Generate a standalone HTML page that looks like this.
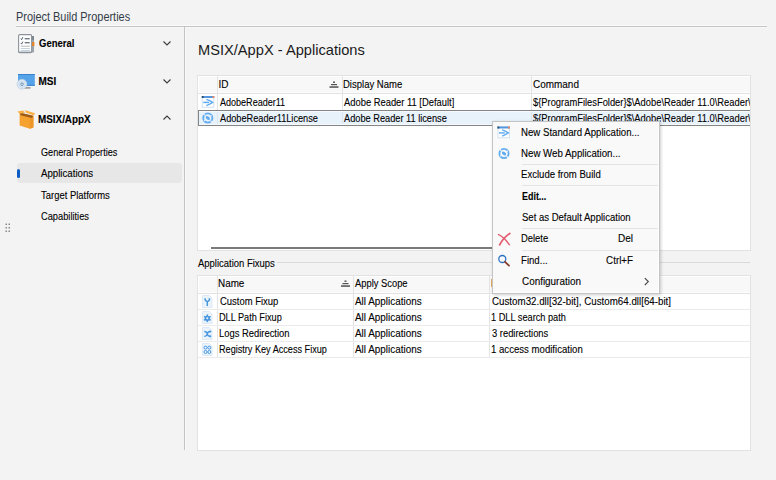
<!DOCTYPE html>
<html><head><meta charset="utf-8">
<style>
html,body{margin:0;padding:0}
body{width:776px;height:480px;overflow:hidden;background:#f3f3f3;position:relative;font-family:"Liberation Sans",sans-serif;color:#000}
.a{position:absolute}
.t{position:absolute;white-space:pre;font-size:10px;line-height:12px;-webkit-text-stroke:0.1px currentColor;transform-origin:0 0}
svg{position:absolute;left:0;top:0;overflow:visible}
</style></head><body>

<!-- header lines -->
<div class="a" style="left:16px;top:25px;width:751px;height:1px;background:#fbfbfb"></div>
<div class="a" style="left:16px;top:26px;width:751px;height:1px;background:#c3c3c3"></div>
<div class="a" style="left:16px;top:27px;width:751px;height:1px;background:#f8f8f8"></div>
<div class="a" style="left:184px;top:26px;width:1px;height:424px;background:#c3c3c3"></div>
<div class="a" style="left:185px;top:27px;width:1px;height:423px;background:#f9f9f9"></div>

<!-- sidebar selection -->
<div class="a" style="left:17px;top:163px;width:165px;height:20px;background:#e7e7e7;border-radius:3px"></div>
<div class="a" style="left:17px;top:169px;width:3px;height:9px;background:#0b5cc4;border-radius:1.5px"></div>

<!-- top table -->
<div class="a" style="left:197px;top:75px;width:552px;height:174px;background:#fff;border:1px solid #e2e2e2"></div>
<div class="a" style="left:198px;top:76px;width:552px;height:17px;background:#f8f8f8;box-shadow:inset 1px 1px 0 #fff, inset 0 -1px 0 #fdfdfd"></div>
<div class="a" style="left:198px;top:93px;width:552px;height:1px;background:#e2e2e2"></div>
<div class="a" style="left:217px;top:76px;width:1px;height:34px;background:#e4e4e4"></div>
<div class="a" style="left:342px;top:76px;width:1px;height:34px;background:#e4e4e4"></div>
<div class="a" style="left:531px;top:76px;width:1px;height:34px;background:#e4e4e4"></div>
<div class="a" style="left:198px;top:110px;width:551px;height:14px;background:#e8f2fb;border:1px solid #858585;border-right:0;box-shadow:inset 0 1px 0 #f6faff, inset 0 -1px 0 #f6faff"></div>
<div class="a" style="left:217px;top:112px;width:1px;height:12px;background:#dde6ee"></div>
<div class="a" style="left:342px;top:112px;width:1px;height:12px;background:#dde6ee"></div>
<div class="a" style="left:531px;top:112px;width:1px;height:12px;background:#dde6ee"></div>
<div class="a" style="left:211px;top:247px;width:281px;height:2px;background:#7a7a7a"></div>

<!-- lower group -->
<div class="a" style="left:277px;top:262px;width:473px;height:1px;background:#dadada"></div>
<div class="a" style="left:197px;top:275px;width:552px;height:174px;background:#fff;border:1px solid #e2e2e2"></div>
<div class="a" style="left:198px;top:276px;width:552px;height:17px;background:#f8f8f8;box-shadow:inset 1px 1px 0 #fff, inset 0 -1px 0 #fdfdfd"></div>
<div class="a" style="left:198px;top:293px;width:552px;height:1px;background:#e2e2e2"></div>
<div class="a" style="left:217px;top:276px;width:1px;height:82px;background:#e4e4e4"></div>
<div class="a" style="left:353px;top:276px;width:1px;height:82px;background:#e4e4e4"></div>
<div class="a" style="left:489px;top:276px;width:1px;height:82px;background:#e4e4e4"></div>
<div class="a" style="left:198px;top:309px;width:552px;height:1px;background:#ebebeb"></div>
<div class="a" style="left:198px;top:325px;width:552px;height:1px;background:#ebebeb"></div>
<div class="a" style="left:198px;top:341px;width:552px;height:1px;background:#ebebeb"></div>
<div class="a" style="left:198px;top:357px;width:552px;height:1px;background:#ebebeb"></div>

<!-- command column (clipped) -->
<div class="a" style="left:532px;top:94px;width:218px;height:32px;overflow:hidden">
 <div class="t" style="left:0.5px;top:3px;transform:scaleX(0.935)">${ProgramFilesFolder}$\Adobe\Reader 11.0\Reader\AcroRd32.exe</div>
 <div class="t" style="left:0.5px;top:19px;transform:scaleX(0.935)">${ProgramFilesFolder}$\Adobe\Reader 11.0\Reader\AcroRd32.exe</div>
</div>

<svg width="776" height="480">
 <!-- chevrons -->
 <g fill="none" stroke="#3c3c3c" stroke-width="1.1">
  <path d="M163.5 41.5 L167 45 L170.5 41.5"/>
  <path d="M163.5 79.5 L167 83 L170.5 79.5"/>
  <path d="M163.5 119.5 L167 116 L170.5 119.5"/>
 </g>
 <!-- grip -->
 <g fill="#8a8a8a">
  <rect x="5.5" y="223.5" width="1.5" height="1.5"/><rect x="8.5" y="223.5" width="1.5" height="1.5"/>
  <rect x="5.5" y="227" width="1.5" height="1.5"/><rect x="8.5" y="227" width="1.5" height="1.5"/>
  <rect x="5.5" y="230.5" width="1.5" height="1.5"/><rect x="8.5" y="230.5" width="1.5" height="1.5"/>
 </g>
 <!-- General icon: notepad -->
 <g>
  <rect x="18.6" y="34.6" width="13" height="18" rx="1.2" fill="#fff" stroke="#8b929a" stroke-width="1.1"/>
  <rect x="18.6" y="51.6" width="13" height="1.4" fill="#8b929a"/>
  <rect x="31.8" y="36" width="2.2" height="16.5" fill="#9aa3ac"/>
  <rect x="31.8" y="36" width="2.2" height="4" fill="#7d8792"/>
  <rect x="32.2" y="42" width="2.2" height="4.1" fill="#ea821c"/>
  <path d="M20.9 38.6 l0.8 1.1 l1.1 -2.6 M20.9 43 l0.8 1.1 l1.1 -2.6" fill="none" stroke="#4a5a6c" stroke-width="0.9"/>
  <rect x="24.7" y="38" width="5" height="1.4" fill="#737b84"/>
  <rect x="24.7" y="42" width="5" height="1.4" fill="#737b84"/>
  <rect x="20.8" y="45.6" width="9.2" height="1.3" fill="#c9c9c9"/>
  <rect x="20.8" y="48.2" width="9.2" height="0.8" fill="#b8c8d8"/>
  <rect x="20.8" y="50.1" width="9.2" height="0.8" fill="#b8c8d8"/>
 </g>
 <!-- MSI icon -->
 <g>
  <rect x="18" y="74" width="16.8" height="11.8" fill="#55a3e8"/>
  <rect x="18" y="74" width="16.8" height="1" fill="#3a82cc"/>
  <rect x="18" y="84.8" width="16.8" height="1" fill="#3a82cc"/>
  <rect x="24.5" y="87.3" width="6" height="1.2" fill="#7a7a7a"/>
  <circle cx="22" cy="84.2" r="4.9" fill="#dce9f4" stroke="#b4cadc" stroke-width="0.7"/>
  <circle cx="22" cy="84.2" r="3" fill="none" stroke="#c6dbed" stroke-width="0.8"/>
  <circle cx="22" cy="84.2" r="1.3" fill="#f2f7fb" stroke="#5e88ad" stroke-width="0.9"/>
 </g>
 <!-- MSIX icon: box -->
 <g>
  <path d="M19.6 113 L33.5 116.2 L33.4 127.4 L29.8 128.8 L19.6 125.4 Z" fill="#f6a230"/>
  <path d="M29.8 117.6 L33.5 116.2 L33.4 127.4 L29.8 128.8 Z" fill="#ee9628"/>
  <path d="M19.8 112.6 L33.4 115.8 L31.8 118 L20.5 115.2 Z" fill="#9c5c18"/>
  <path d="M17.3 111.6 L22.9 110.4 L25.2 112.6 L19.8 113.8 Z" fill="#fab044"/>
  <path d="M24.6 110 L35 113.2 L33.8 115.6 L26.2 112.8 Z" fill="#fab044"/>
 </g>
 <!-- sort glyphs -->
 <g fill="#505050">
  <rect x="333" y="81.5" width="2" height="1.4"/><rect x="331" y="84" width="6" height="1.2"/><rect x="329.5" y="86.3" width="9" height="1.5"/>
  <rect x="344.5" y="280.5" width="2" height="1.4"/><rect x="342.5" y="283" width="6" height="1.2"/><rect x="341" y="285.3" width="9" height="1.5"/>
 </g>
 <!-- row icons top table -->
 <g transform="translate(201.8 96)">
  <rect x="0.5" y="0.5" width="11.5" height="10.8" fill="#fff" stroke="#d3e2f1"/>
  <rect x="0" y="0" width="12.5" height="2" fill="#5597de"/>
  <rect x="0" y="0" width="1.8" height="2" fill="#2d4f70"/>
  <rect x="10.7" y="0" width="1.8" height="2" fill="#ee8a5c"/>
  <path d="M1.5 6.4 H7.3" stroke="#62aaee" stroke-width="1.5" fill="none"/>
  <path d="M4.6 3.4 Q8 4.4 10.8 6.4 Q8 8.4 4.6 9.6" stroke="#62aaee" stroke-width="1.4" fill="none"/>
 </g>
 <g transform="translate(207.8 118)">
  <circle r="4.6" fill="none" stroke="#62acf0" stroke-width="1.8"/>
  <ellipse rx="2.4" ry="1.6" transform="rotate(35)" fill="#62acf0"/>
  <path d="M-4 -4 L-2.6 -2.6 M4 4 L2.6 2.6 M3.8 -2.8 L2 -1.5 M-3.8 2.8 L-2 1.5" stroke="#e8f2fb" stroke-width="1.1"/>
 </g>
 <!-- lower table doc icons -->
 <g fill="#ebf3fb" stroke="#d3e3f3" stroke-width="0.7">
  <path d="M202.5 295.5 H209.3 L212 298.2 V307.5 H202.5 Z"/>
  <path d="M202.5 311.5 H209.3 L212 314.2 V323.5 H202.5 Z"/>
  <path d="M202.5 327.5 H209.3 L212 330.2 V339.5 H202.5 Z"/>
  <path d="M202.5 343.5 H209.3 L212 346.2 V355.5 H202.5 Z"/>
 </g>
 <g fill="none" stroke="#4797e0" stroke-width="1.5">
  <path d="M205.2 298.2 V300 Q207.3 303 209.4 300 V298.2 M207.3 302 V306"/>
  <path d="M204.3 331.5 Q206.8 331.5 207.3 333.8 Q207.8 336.3 210.3 336.3 M204.3 336.3 Q206.8 336.3 207.3 333.8 Q207.8 331.5 210.3 331.5" stroke-width="1.3"/>
  <circle cx="210.2" cy="331.5" r="1.1" fill="#4797e0" stroke="none"/><circle cx="210.2" cy="336.3" r="1.1" fill="#4797e0" stroke="none"/>
 </g>
 <g transform="translate(207.3 318.3)" fill="#4797e0">
  <circle r="2.6"/>
  <rect x="-0.8" y="-3.8" width="1.6" height="7.6"/>
  <rect x="-0.8" y="-3.8" width="1.6" height="7.6" transform="rotate(60)"/>
  <rect x="-0.8" y="-3.8" width="1.6" height="7.6" transform="rotate(120)"/>
  <circle r="1" fill="#ebf3fb"/>
 </g>
 <g fill="none" stroke="#4797e0" stroke-width="1">
  <circle cx="205.5" cy="347.6" r="1.5"/><circle cx="209.3" cy="347.6" r="1.5"/>
  <circle cx="205.5" cy="352" r="1.5"/><circle cx="209.3" cy="352" r="1.5"/>
 </g>
</svg>

<div class="t" style="left:16px;top:10px;font-size:12px;line-height:14px;color:#323b47;transform:scaleX(0.910);-webkit-text-stroke:0">Project Build Properties</div>
<div class="t" style="left:39.0px;top:38px;font-weight:bold;transform:scaleX(0.951)">General</div>
<div class="t" style="left:38.5px;top:76px;font-weight:bold">MSI</div>
<div class="t" style="left:38.0px;top:114px;font-weight:bold;transform:scaleX(0.987)">MSIX/AppX</div>
<div class="t" style="left:41px;top:147px;transform:scaleX(0.909)">General Properties</div>
<div class="t" style="left:41px;top:168px;transform:scaleX(0.967)">Applications</div>
<div class="t" style="left:41px;top:190px;transform:scaleX(0.945)">Target Platforms</div>
<div class="t" style="left:41px;top:211px;transform:scaleX(0.927)">Capabilities</div>
<div class="t" style="left:197.5px;top:41px;font-size:15px;line-height:18px;color:#1a1a1a;transform:scaleX(0.976);-webkit-text-stroke:0">MSIX/AppX - Applications</div>
<div class="t" style="left:218.5px;top:79px">ID</div>
<div class="t" style="left:343px;top:79px;transform:scaleX(0.951)">Display Name</div>
<div class="t" style="left:532.5px;top:79px;transform:scaleX(0.996)">Command</div>
<div class="t" style="left:219.5px;top:97px;transform:scaleX(0.903)">AdobeReader11</div>
<div class="t" style="left:344px;top:97px;transform:scaleX(0.937)">Adobe Reader 11 [Default]</div>
<div class="t" style="left:219.5px;top:113px;transform:scaleX(0.919)">AdobeReader11License</div>
<div class="t" style="left:344px;top:113px;transform:scaleX(0.922)">Adobe Reader 11 license</div>
<div class="t" style="left:198px;top:258px;transform:scaleX(0.947)">Application Fixups</div>
<div class="t" style="left:217.7px;top:278px;transform:scaleX(0.988)">Name</div>
<div class="t" style="left:354.5px;top:278px;transform:scaleX(0.936)">Apply Scope</div>
<div class="t" style="left:490.5px;top:278px;transform:scaleX(0.940)">Details</div>
<div class="t" style="left:219.5px;top:296px;transform:scaleX(0.946)">Custom Fixup</div>
<div class="t" style="left:355.0px;top:296px;transform:scaleX(0.990)">All Applications</div>
<div class="t" style="left:491.5px;top:296px;transform:scaleX(0.976)">Custom32.dll[32-bit], Custom64.dll[64-bit]</div>
<div class="t" style="left:218.5px;top:312px;transform:scaleX(0.915)">DLL Path Fixup</div>
<div class="t" style="left:355.0px;top:312px;transform:scaleX(0.990)">All Applications</div>
<div class="t" style="left:490.5px;top:312px;transform:scaleX(0.921)">1 DLL search path</div>
<div class="t" style="left:218.5px;top:328px;transform:scaleX(0.939)">Logs Redirection</div>
<div class="t" style="left:355.0px;top:328px;transform:scaleX(0.990)">All Applications</div>
<div class="t" style="left:491.5px;top:328px;transform:scaleX(0.937)">3 redirections</div>
<div class="t" style="left:218.9px;top:344px;transform:scaleX(0.911)">Registry Key Access Fixup</div>
<div class="t" style="left:355.0px;top:344px;transform:scaleX(0.990)">All Applications</div>
<div class="t" style="left:490.9px;top:344px;transform:scaleX(0.960)">1 access modification</div>

<!-- context menu -->
<div class="a" style="left:492px;top:121px;width:168px;height:173px;box-sizing:border-box;background:#f9f9f9;border:1px solid #c4c4c4;box-shadow:inset -1px -1px 0 #fff, 1px 1px 3px rgba(0,0,0,0.2)"></div>
<div class="a" style="left:522px;top:164px;width:136px;height:1px;background:#e4e4e4"></div>
<div class="a" style="left:522px;top:185px;width:136px;height:1px;background:#e4e4e4"></div>
<div class="a" style="left:522px;top:228px;width:136px;height:1px;background:#e4e4e4"></div>
<div class="a" style="left:522px;top:250px;width:136px;height:1px;background:#e4e4e4"></div>
<div class="t" style="left:520.5px;top:127px;transform:scaleX(0.965)">New Standard Application...</div>
<div class="t" style="left:520.5px;top:148px;transform:scaleX(0.970)">New Web Application...</div>
<div class="t" style="left:520.5px;top:169px;transform:scaleX(0.956)">Exclude from Build</div>
<div class="t" style="left:521.5px;top:191px;font-weight:bold;transform:scaleX(0.892)">Edit...</div>
<div class="t" style="left:521.5px;top:212px;transform:scaleX(0.953)">Set as Default Application</div>
<div class="t" style="left:520.5px;top:233px;transform:scaleX(0.939)">Delete</div>
<div class="t" style="left:520.5px;top:255px;transform:scaleX(0.962)">Find...</div>
<div class="t" style="left:521.5px;top:276px;transform:scaleX(0.990)">Configuration</div>
<div class="t" style="left:593px;top:233px;width:40px;text-align:right">Del</div>
<div class="t" style="left:593px;top:255px;width:40px;text-align:right;transform:scaleX(0.978);transform-origin:100% 0">Ctrl+F</div>
<svg width="776" height="480">
 <path d="M644.8 278.2 L648.3 281.6 L644.8 285" fill="none" stroke="#444" stroke-width="1.1"/>
 <!-- new standard app icon -->
 <g transform="translate(497.5 126.5)">
  <rect x="0.5" y="0.5" width="11.5" height="10.8" fill="#fff" stroke="#d3e2f1"/>
  <rect x="0" y="0" width="12.5" height="2" fill="#5597de"/>
  <rect x="0" y="0" width="1.8" height="2" fill="#2d4f70"/>
  <rect x="10.7" y="0" width="1.8" height="2" fill="#ee8a5c"/>
  <path d="M1.5 6.4 H7.3" stroke="#62aaee" stroke-width="1.5" fill="none"/>
  <path d="M4.6 3.4 Q8 4.4 10.8 6.4 Q8 8.4 4.6 9.6" stroke="#62aaee" stroke-width="1.4" fill="none"/>
 </g>
 <!-- web app icon -->
 <g transform="translate(504 153.5)">
  <circle r="4.6" fill="none" stroke="#62acf0" stroke-width="1.8"/>
  <ellipse rx="2.4" ry="1.6" transform="rotate(35)" fill="#62acf0"/>
  <path d="M-4 -4 L-2.6 -2.6 M4 4 L2.6 2.6 M3.8 -2.8 L2 -1.5 M-3.8 2.8 L-2 1.5" stroke="#f9f9f9" stroke-width="1.1"/>
 </g>
 <!-- delete X -->
 <path d="M498.6 234.6 Q503.5 236.5 509.3 244.6" fill="none" stroke="#e35d72" stroke-width="1.5" stroke-linecap="round"/>
 <path d="M509.8 233.4 Q503.5 237.5 499.6 244.8" fill="none" stroke="#e35d72" stroke-width="1.8" stroke-linecap="round"/>
 <!-- find -->
 <circle cx="502.3" cy="259" r="3.5" fill="none" stroke="#2c71c2" stroke-width="1.3"/>
 <path d="M505 261.8 L509 265.6" stroke="#873a2b" stroke-width="1.8" stroke-linecap="round"/>
</svg>
</body></html>
